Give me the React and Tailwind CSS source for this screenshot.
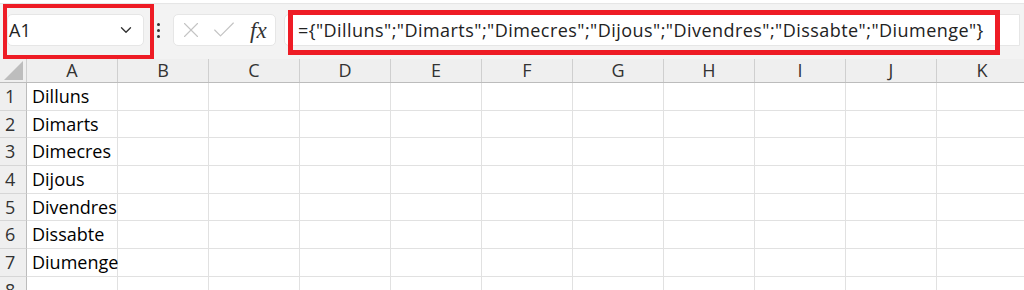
import { ChevronDown, X, Check } from 'lucide-react';

const cols = ['A', 'B', 'C', 'D', 'E', 'F', 'G', 'H', 'I', 'J', 'K'];
const days = ['Dilluns', 'Dimarts', 'Dimecres', 'Dijous', 'Divendres', 'Dissabte', 'Diumenge'];
const formula = '={"Dilluns";"Dimarts";"Dimecres";"Dijous";"Divendres";"Dissabte";"Diumenge"}';

export default function App() {
  const rows = [...days, ''];

  return (
    <div className="relative w-[1024px] h-[290px] overflow-hidden bg-white font-['Open_Sans',sans-serif] text-[#222]">
      {/* Formula bar */}
      <div className="h-[59px] bg-[#f3f3f3] border-t-[3px] border-t-white shadow-[inset_0_1px_1px_rgba(0,0,0,0.06)] flex items-center pl-[7px] pb-[2px]">
        <div className="w-[137px] h-[32px] bg-white rounded-[5px] border border-[#e6e6e6] flex items-center justify-between pl-[1px] pr-[8px]">
          <span className="text-[18px] leading-none">A1</span>
          <ChevronDown className="w-[18px] h-[18px] text-[#333]" strokeWidth={1.8} />
        </div>
        <div className="w-[30px] flex flex-col items-center gap-[3px] ml-[-1px]">
          <span className="w-[3px] h-[3px] rounded-full bg-[#333]" />
          <span className="w-[3px] h-[3px] rounded-full bg-[#333]" />
          <span className="w-[3px] h-[3px] rounded-full bg-[#333]" />
        </div>
        <div className="w-[103px] h-[32px] bg-white rounded-[5px] border border-[#e6e6e6] flex items-center pl-[4px] gap-[6px]">
          <X className="w-[26px] h-[26px] text-[#c4c4c4]" strokeWidth={1} />
          <Check className="w-[28px] h-[28px] text-[#c4c4c4]" strokeWidth={1} />
          <span className="ml-[6px] font-['Liberation_Serif',serif] italic text-[23px] leading-none text-[#333]">fx</span>
        </div>
        <div className="ml-[8px] w-[736px] h-[32px] bg-white rounded-l-[5px] border border-[#e6e6e6] flex items-center pl-[13px]">
          <span className="text-[18px] leading-none tracking-[0.45px] whitespace-nowrap">{formula}</span>
        </div>
      </div>

      {/* Grid */}
      <div className="flex h-[24px] bg-[#efefef] border-b border-b-[#bcbcbc]">
        <div className="w-[27px] shrink-0 border-r border-r-[#cfcfcf] flex items-end justify-end pb-[2px] pr-[3px]">
          <svg width="19" height="19" viewBox="0 0 19 19">
            <path d="M19 0 L19 19 L0 19 Z" fill="#bdbdbd" />
          </svg>
        </div>
        {cols.map((c) => (
          <div key={c} className="w-[91px] shrink-0 border-r border-r-[#cfcfcf] flex items-center justify-center text-[18px] text-[#333]">
            {c}
          </div>
        ))}
      </div>

      {rows.map((d, i) => (
        <div key={i} className="flex h-[27.7px]">
          <div className="w-[27px] shrink-0 bg-[#efefef] border-r border-r-[#bcbcbc] border-b border-b-[#d6d6d6] flex items-center pl-[5px] text-[18px] text-[#333]">
            {i + 1}
          </div>
          {cols.map((c) => (
            <div key={c} className="w-[91px] shrink-0 border-r border-b border-[#e1e1e1] flex items-center pl-[5px] text-[18px] text-black whitespace-nowrap overflow-visible">
              {c === 'A' ? d : ''}
            </div>
          ))}
        </div>
      ))}

      {/* Red annotation boxes */}
      <div className="absolute left-[3px] top-[4px] w-[151px] h-[55px] border-[4px] border-[#ee1c25]" />
      <div className="absolute left-[288px] top-[10px] w-[712px] h-[45px] border-[5px] border-[#ee1c25]" />
    </div>
  );
}
